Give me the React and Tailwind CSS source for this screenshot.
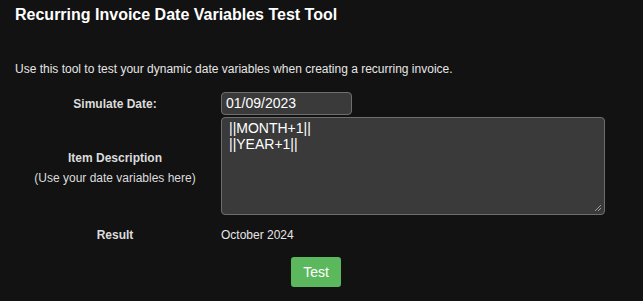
export default function App() {
  return (
    <div className="w-[643px] h-[301px] bg-[#121212] text-[#e6e6e6] overflow-hidden" style={{ fontFamily: '"Liberation Sans", Arial, sans-serif' }}>
      <h1 className="pl-[15px] pt-[5px] text-[16px] leading-[20px] font-bold text-white">Recurring Invoice Date Variables Test Tool</h1>
      <p className="pl-[15px] mt-[37px] text-[12px] leading-[14px] text-[#e6e6e6]">Use this tool to test your dynamic date variables when creating a recurring invoice.</p>
      <div className="mt-[16px] grid grid-cols-[202px_1fr] gap-y-[2px] pl-[15px] items-center">
        <div className="text-center text-[12px] font-bold text-[#dcdcdc] pr-[2px]">Simulate Date:</div>
        <div className="pl-[4px]">
          <div className="w-[131px] h-[23px] bg-[#3a3a3a] border border-[#6e6e6e] rounded-[4px] text-[14px] leading-[21px] pl-[4px] text-white">01/09/2023</div>
        </div>
        <div className="text-center text-[12px] text-[#dcdcdc] leading-[20px] pt-[3px] pr-[2px]">
          <div className="font-bold">Item Description</div>
          <div>(Use your date variables here)</div>
        </div>
        <div className="pl-[4px]">
          <div className="relative w-[384px] h-[98px] bg-[#3a3a3a] border border-[#6e6e6e] rounded-[4px] text-[14px] leading-[16px] pl-[7px] pt-[2px] text-white">
            <div>||MONTH+1||</div>
            <div>||YEAR+1||</div>
            <svg className="absolute right-[2px] bottom-[2px]" width="8" height="8" viewBox="0 0 8 8">
              <path d="M7 1 L1 7 M7 4 L4 7" stroke="#9a9a9a" strokeWidth="1" />
            </svg>
          </div>
        </div>
        <div className="text-center text-[12px] font-bold text-[#dcdcdc] h-[36px] leading-[36px] pr-[2px]">Result</div>
        <div className="pl-[4px] text-[12px] h-[36px] leading-[36px] text-[#e6e6e6]">October 2024</div>
      </div>
      <div className="flex pl-[291px] mt-[4px]">
        <button className="w-[50px] h-[30px] bg-[#5cb85c] rounded-[3px] text-white text-[14px]" style={{ fontFamily: '"Liberation Sans", Arial, sans-serif' }}>Test</button>
      </div>
    </div>
  );
}
